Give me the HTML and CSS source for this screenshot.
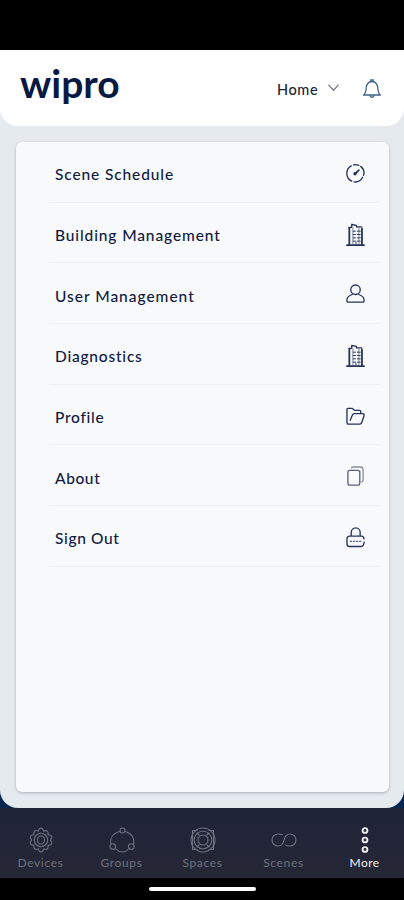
FILE: index.html
```
<!DOCTYPE html>
<html lang="en">
<head>
<meta charset="utf-8">
<title>More</title>
<link rel="stylesheet" href="styles.css">
</head>
<body>
<svg class="sprite">
  <symbol id="building" viewBox="0 0 20 24"><path d="M1 23.200h18M3.500 23V5M16.800 23V5.500" stroke-width="1.900"/><path d="M3 4.500h3V1.500l5 .8V4h5.500" stroke-width="1.400"/><path d="M7.300 5v18M13.600 5v18" stroke-width=".6"/><path d="M7.500 8.500H10M12 8.500h3M7.500 12H10M12 12h3M7.500 15.500H10M12 15.500h3M7.500 19H10M12 19h3M10.500 20v3" stroke-width="1"/></symbol>
</svg>
<div class="status"></div>
<main class="screen">
  <header class="header">
    <div class="logo">wipro</div>
    <div class="place">Home</div>
    <svg class="chevron" viewBox="0 0 10 7"><path d="M.7.900 5 5.500 9.300.9"/></svg>
    <svg class="bell" viewBox="0 0 20 22"><path d="M1.500 17c1.600-1.100 2.300-2.300 2.400-4.500C4 7.300 5.600 3.500 10 3.500s6 3.800 6.100 9c.1 2.200.8 3.400 2.400 4.500zM8.700 3.500V1.800h2.600v1.700M8 17.500c.3 2.300 3.700 2.300 4 0"/></svg>
  </header>
  <section class="card">
    <div class="row"><span class="label schedule">Scene Schedule</span><svg class="icon" viewBox="0 0 20 24"><path d="M6 20A9 9 0 0 1 5.500 4M8 3A9 9 0 0 1 13.500 3.400M15.500 4.500A9 9 0 0 1 18.500 14M17.500 16A9 9 0 0 1 8.500 20.900"/><path d="m9.500 12.500 4-4" stroke-width="1.900"/><circle cx="9.500" cy="12.300" r="1.100" fill="#12204a"/></svg></div>
    <div class="row"><span class="label building">Building Management</span><svg class="icon"><use href="#building"/></svg></div>
    <div class="row"><span class="label user">User Management</span><svg class="icon" viewBox="0 0 20 24"><circle cx="10" cy="7" r="5"/><path d="M6.500 12C3 13.300 1 15 1 17.500V19q0 1 1 1h16q1 0 1-1v-1.500c0-2.500-2-4.200-5.500-5.500"/></svg></div>
    <div class="row"><span class="label diagnostics">Diagnostics</span><svg class="icon"><use href="#building"/></svg></div>
    <div class="row"><span class="label profile">Profile</span><svg class="icon" viewBox="0 0 20 24"><path d="M15.500 8.500V6.500q0-1-1-1H9L6.500 3.500H2q-1 0-1 1V18q0 2 2 2h11.500c1.200 0 1.800-.7 2.200-2l2.200-6.500c.5-1.400 0-2.500-1.500-2.500H9C7.500 9 7 9.500 6.500 11L4.500 16"/></svg></div>
    <div class="row"><span class="label about">About</span><svg class="icon copy" viewBox="0 0 20 24"><rect x="2" y="5.500" width="12.500" height="15.500" rx="2" stroke="#59627f"/><path stroke="#8990a2" d="M6 3q0-1 1-1h8q3 0 3 3v10.500q0 2-1.500 2"/></svg></div>
    <div class="row"><span class="label signout">Sign Out</span><svg class="icon" viewBox="0 0 20 24"><path d="M5.500 10V6.500a4.700 4.700 0 0 1 9.400 0V10M4 10.500h12q3 0 3 3M19 17q0 4.500-4 4.500H4q-3 0-3-3v-5q0-3 3-3"/><path d="M4.500 16H6M7.800 16h1.500M11 16h1.500M14.200 16h1.500" stroke-width="1"/></svg></div>
  </section>
</main>
<nav class="tabs">
  <div class="tab"><svg viewBox="0 0 26 26"><path d="M10.700 3.200c.6-2.800 4-2.800 4.600 0l.5 1c2.600-1.600 5 .5 4.200 2.800l1 1c2.800-.2 4 2.800 1.500 4.500v1c2.500 1.700 1.300 4.700-1.500 4.500l-1 1c.8 2.500-1.600 4.500-4.200 2.800l-.5 1c-.6 2.800-4 2.800-4.600 0l-.5-1c-2.600 1.600-5-.3-4.200-2.800l-1-1c-2.800.2-4-2.800-1.500-4.500v-1C1 10.800 2.200 7.800 5 8l1-1c-.8-2.500 1.600-4.500 4.200-2.800z"/><circle cx="13" cy="13" r="6.700"/><ellipse cx="13" cy="13" rx="3.500" ry="4"/></svg><span>Devices</span></div>
  <div class="tab"><svg viewBox="0 0 26 26"><circle cx="13.500" cy="3.500" r="2.500"/><circle cx="3.800" cy="19.500" r="2.800"/><circle cx="22.300" cy="19.500" r="2.800"/><path d="M10.500 4.500C3.500 6.500.700 11.500 2 17M16.500 4.500c6.500 2 9.300 7 8 12.500M7 22c3.500 4 9 4 12.500 0"/></svg><span>Groups</span></div>
  <div class="tab"><svg viewBox="0 0 26 26"><circle cx="13" cy="13" r="12"/><circle cx="13" cy="13" r="8.800"/><circle cx="13" cy="13" r="5"/><path d="M2.500 8V3.500H7M19 3.500h4.500V8M2.500 18v4.500H7M19 22.500h4.500V18M2.500 8v10M23.500 8v10M7 6l2 2M19 6l-2 2M7 20l2-2M19 20l-2-2"/></svg><span>Spaces</span></div>
  <div class="tab"><svg viewBox="0 0 26 26"><path d="M11.500 7.500C10 7 8.500 7 7 7a6 6 0 0 0 0 12c4 0 5-2 6-6s2.500-6 6-6a6 6 0 0 1 0 12c-1.800 0-3.500-.2-4.500-1"/></svg><span>Scenes</span></div>
  <div class="tab active"><svg viewBox="0 0 26 26"><circle cx="13" cy="3.500" r="2.400"/><circle cx="13" cy="13" r="2.400"/><circle cx="13" cy="22.500" r="2.400"/></svg><span>More</span></div>
</nav>
<div class="gesture"><div class="handle"></div></div>
</body>
</html>
```
FILE: styles.css
```
* { box-sizing: border-box; }
body { margin: 0; width: 404px; height: 900px; overflow: hidden; display: flex; flex-direction: column; background: #062750; font-family: Lato, "Open Sans", sans-serif; color: #101a42; }
svg { fill: none; stroke: currentColor; stroke-linecap: round; stroke-linejoin: round; flex: none; }
.sprite { display: none; }
.status { height: 50px; background: #000; }
.screen { height: 758px; background: #e5eaef; border-radius: 0 0 18px 18px; }
.header { height: 76px; background: #fff; border-radius: 0 0 18px 18px; display: flex; align-items: flex-start; padding: 0 22px 0 20px; }
.logo { width: 257px; padding-top: 9px; font-size: 39px; line-height: 48px; font-weight: 700; letter-spacing: 0; color: #081a43; }
.place { width: 51px; padding-top: 30px; font-size: 14.500px; line-height: 20px; font-weight: 500; letter-spacing: .6px; color: #20243a; }
.chevron { width: 11px; height: 8px; margin-top: 34px; stroke: #7b7e87; stroke-width: 1.200; }
.bell { width: 20px; height: 22px; margin: 28px 0 0 auto; stroke: #3d6488; stroke-width: 1.300; }
.card { width: 373px; height: 650px; margin: 16px 0 0 16px; background: #f7f9fb; border-radius: 6px; box-shadow: 0 1px 3px #a8afb7; }
.row { height: 60.700px; margin: 0 9px 0 33px; padding: 3px 15px 0 6px; border-bottom: 1px solid #eef0f2; display: flex; align-items: center; justify-content: space-between; }
.label { padding-top: 2px; font-size: 15.500px; line-height: 22px; font-weight: 500; white-space: nowrap; }
.schedule { letter-spacing: .88px; }
.building { letter-spacing: .88px; }
.user { letter-spacing: .98px; }
.diagnostics { letter-spacing: .78px; }
.profile { letter-spacing: .72px; }
.about { letter-spacing: .6px; }
.signout { letter-spacing: .65px; }
.icon { width: 19px; height: 23px; color: #27345b; stroke-width: 1.400; }
.tabs { height: 70px; background: linear-gradient(#202438, #252736); display: grid; grid-template-columns: repeat(5, 81px); }
.tab { display: flex; flex-direction: column; align-items: center; padding-top: 19px; font-size: 12px; line-height: 16px; letter-spacing: .65px; color: #6e717e; }
.tab svg { width: 26px; height: 26px; stroke-width: 1.100; margin-bottom: 2px; }
.tab.active { color: #f0f0f2; letter-spacing: .4px; }
.tab.active svg { stroke-width: 1.900; }
.gesture { height: 22px; background: #000; display: flex; justify-content: center; padding-top: 9px; }
.handle { width: 107px; height: 4px; border-radius: 2px; background: #fff; }
```
